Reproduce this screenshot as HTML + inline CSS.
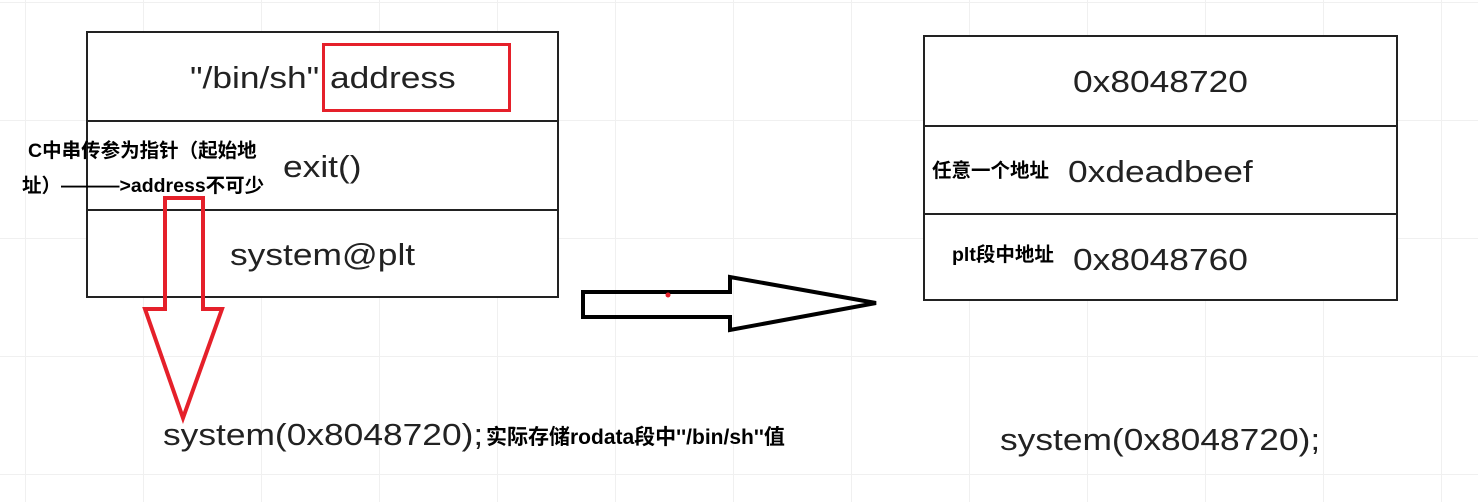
<!DOCTYPE html>
<html><head><meta charset="utf-8"><style>
body{margin:0;width:1478px;height:502px;background:#fff;position:relative;overflow:hidden;font-family:"Liberation Sans","Noto Sans CJK SC",sans-serif;}
.grid{position:absolute;inset:0;background-image:linear-gradient(#f0f0f0 1px,transparent 1px),linear-gradient(90deg,#f0f0f0 1px,transparent 1px);background-size:118px 118px;background-position:25px 2px;}
.box{position:absolute;border:2px solid #222;box-sizing:border-box;background:#fff;}
.row{position:absolute;left:0;right:0;border-top:2px solid #222;}
.t{position:absolute;color:#222;white-space:nowrap;font-size:31px;transform:scaleX(1.14);transform-origin:0 0;}
.b{position:absolute;font-weight:bold;color:#000;white-space:nowrap;font-size:19.5px;}
</style></head><body>
<div class="grid"></div>
<div class="box" style="left:86px;top:31px;width:473px;height:267px;">
 <div class="row" style="top:87px"></div>
 <div class="row" style="top:176px"></div>
</div>
<div class="t" style="left:190px;top:60px;">"/bin/sh"</div>
<div class="t" style="left:330px;top:60px;">address</div>
<div style="position:absolute;left:322px;top:43px;width:189px;height:69px;border:3px solid #e5202a;box-sizing:border-box;"></div>
<div class="t" style="left:283px;top:149px;">exit()</div>
<div class="t" style="left:230px;top:237px;">system@plt</div>
<div class="b" style="left:28px;top:134px;">C中串传参为指针（起始地</div>
<div class="b" style="left:22px;top:169px;">址）———&gt;address不可少</div>
<svg style="position:absolute;left:0;top:0" width="1478" height="502">
 <polygon points="165,198 203,198 203,309 222,309 183,418 145,309 165,309" fill="none" stroke="#e5202a" stroke-width="4"/>
 <polygon points="583,292 730,292 730,277 876,303 730,330 730,317 583,317" fill="none" stroke="#000" stroke-width="4"/>
 <circle cx="668" cy="295" r="2.5" fill="#e5202a"/>
</svg>
<div class="t" style="left:163px;top:417px;">system(0x8048720);</div>
<div class="b" style="left:486px;top:421px;font-size:21px;">实际存储rodata段中''/bin/sh''值</div>
<div class="box" style="left:923px;top:35px;width:475px;height:266px;">
 <div class="row" style="top:88px"></div>
 <div class="row" style="top:176px"></div>
</div>
<div class="t" style="left:1073px;top:64px;">0x8048720</div>
<div class="t" style="left:1068px;top:154px;">0xdeadbeef</div>
<div class="t" style="left:1073px;top:242px;">0x8048760</div>
<div class="b" style="left:932px;top:154px;">任意一个地址</div>
<div class="b" style="left:952px;top:238px;">plt段中地址</div>
<div class="t" style="left:1000px;top:422px;">system(0x8048720);</div>
</body></html>
